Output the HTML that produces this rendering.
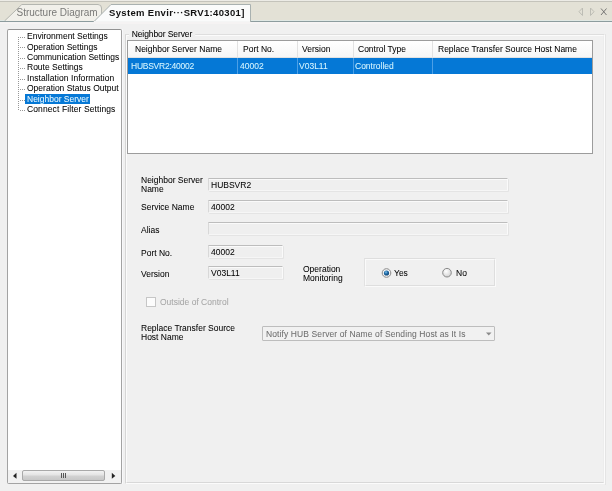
<!DOCTYPE html>
<html><head><meta charset="utf-8">
<style>
*{margin:0;padding:0;box-sizing:border-box}
html,body{width:612px;height:491px;overflow:hidden;background:#f0f0f0;font-family:"Liberation Sans",sans-serif;color:#000}
.a{position:absolute}
body{will-change:transform}
.t{position:absolute;font-size:9.5px;line-height:10px;white-space:nowrap;-webkit-text-stroke:0.05px currentColor;transform:scaleX(0.895);transform-origin:0 0}
.hl{position:absolute;background:#e4e2d6}
</style></head><body>

<!-- tab bar -->
<div class="a" style="left:0;top:0;width:612px;height:1px;background:#ecebe6"></div>
<div class="a" style="left:0;top:1px;width:612px;height:1px;background:#c4c3bb"></div>
<div class="a" style="left:0;top:2px;width:612px;height:18px;background:#e3e1d6"></div>
<div class="a" style="left:0;top:20px;width:612px;height:1px;background:#e0e8e4"></div>
<div class="a" style="left:0;top:21px;width:612px;height:1px;background:#8c9c9e"></div>
<div class="a" style="left:0;top:22px;width:612px;height:2px;background:#f5f3f3"></div>

<svg class="a" style="left:0;top:0" width="612" height="22" viewBox="0 0 612 22">
  <!-- inactive tab -->
  <path d="M5 21 L22 4 L98 4 Q101 4 101 7 L101 21 Z" fill="#f1f0ea"/>
  <path d="M4.5 21 L21.8 4.5 L98 4.5 Q101.5 4.5 101.5 8 L101.5 21" fill="none" stroke="#b4b6b0" stroke-width="1"/>
  <rect x="0" y="21" width="94" height="1" fill="#8c9c9e"/>
  <!-- active tab -->
  <path d="M93.5 22 L111 4.5 L250.5 4.5 L250.5 22 Z" fill="#fafbfb" stroke="#a9b1b0" stroke-width="1"/>
  <rect x="94" y="21" width="156" height="1.5" fill="#f4f5f5"/>
  <!-- right icons -->
  <path d="M582.5 8 L579 11.7 L582.5 15.5 Z" fill="none" stroke="#bdbdb5" stroke-width="1"/>
  <path d="M590.5 8 L594 11.7 L590.5 15.5 Z" fill="none" stroke="#bdbdb5" stroke-width="1"/>
  <path d="M601 8.5 L606.5 15 M606.5 8.5 L601 15" fill="none" stroke="#6a6a6a" stroke-width="0.9"/>
</svg>
<div class="t" style="left:16.5px;top:7px;-webkit-text-stroke:0;transform:none;font-size:10px;line-height:12px;color:#7a7a78">Structure Diagram</div>
<div class="t" style="left:109px;top:7px;-webkit-text-stroke:0;transform:none;font-size:9.5px;letter-spacing:0.33px;line-height:12px;font-weight:bold;color:#111">System Envir···SRV1:40301]</div>

<!-- tree box -->
<div class="a" style="left:7px;top:29px;width:115px;height:455px;background:#fff;border:1px solid #a3a3a3;border-top-color:#929292;border-radius:2px"></div>
<div class="a" style="left:122px;top:29px;width:1px;height:455px;background:#f8f8fa"></div>
<svg class="a" style="left:0;top:0" width="130" height="130">
  <g stroke="#979797" stroke-width="1" stroke-dasharray="1 1" fill="none">
    <path d="M18.5 37 V111"/>
    <path d="M20 37.5 H25"/>
    <path d="M20 47.5 H25"/>
    <path d="M20 58.5 H25"/>
    <path d="M20 68.5 H25"/>
    <path d="M20 79.5 H25"/>
    <path d="M20 89.5 H25"/>
    <path d="M20 100.5 H25"/>
    <path d="M20 110.5 H25"/>
  </g>
</svg>
<div class="a" style="left:25px;top:94px;width:65px;height:10px;background:#0578d6"></div>
<div class="t" style="left:27px;top:31px">Environment Settings</div>
<div class="t" style="left:27px;top:41.5px">Operation Settings</div>
<div class="t" style="left:27px;top:52px">Communication Settings</div>
<div class="t" style="left:27px;top:62px">Route Settings</div>
<div class="t" style="left:27px;top:72.5px;letter-spacing:0.08px">Installation Information</div>
<div class="t" style="left:27px;top:83px">Operation Status Output</div>
<div class="t" style="left:27px;top:93.5px;color:#e8f8ff">Neighbor Server</div>
<div class="t" style="left:27px;top:104px;letter-spacing:0.12px">Connect Filter Settings</div>

<!-- scrollbar -->
<div class="a" style="left:8px;top:470px;width:113px;height:13px;background:#f1f1f1"></div>
<svg class="a" style="left:0;top:460px" width="130" height="30">
  <path d="M16.5 12.8 L13 16 L16.5 18.8 Z" fill="#222"/>
  <path d="M111.8 12.8 L115.3 16 L111.8 18.8 Z" fill="#222"/>
  <defs><linearGradient id="th" x1="0" y1="0" x2="0" y2="1"><stop offset="0" stop-color="#f4f4f4"/><stop offset="0.45" stop-color="#e4e4e4"/><stop offset="0.55" stop-color="#d2d2d2"/><stop offset="1" stop-color="#c6c6c6"/></linearGradient></defs>
  <rect x="22.5" y="10.5" width="82" height="10" rx="1.5" fill="url(#th)" stroke="#a9a9a9"/>
  <path d="M61.5 13 V18 M63.5 13 V18 M65.5 13 V18" stroke="#555" stroke-width="1"/>
</svg>

<!-- right group box -->
<div class="a" style="left:125px;top:34px;width:480px;height:450px;border-top:1px solid #dedede;border-left:1px solid #d6d6d6;border-bottom:1px solid #fbfbfb;border-right:1px solid #fbfbfb"></div>
<div class="a" style="left:126px;top:35px;width:478px;height:448px;border-top:1px solid #fbfbfb;border-left:1px solid #fbfbfb;border-bottom:1px solid #d8d8d8;border-right:1px solid #ececec"></div>
<div class="a" style="left:605px;top:34px;width:1px;height:451px;background:#e4e4e4"></div>
<div class="t" style="left:129px;top:28.5px;padding:0 3px;background:#f0f0f0;letter-spacing:-0.1px">Neighbor Server</div>

<!-- table -->
<div class="a" style="left:127px;top:40px;width:466px;height:114px;background:#fff;border:1px solid #9c9c9c"></div>
<div class="a" style="left:128px;top:41px;width:464px;height:17px;background:linear-gradient(#ffffff,#f6f6f6)"></div>
<div class="a" style="left:128px;top:57px;width:464px;height:1px;background:#e2e2e2"></div>
<div class="a" style="left:237px;top:41px;width:1px;height:17px;background:#e2e2e2"></div>
<div class="a" style="left:297px;top:41px;width:1px;height:17px;background:#e2e2e2"></div>
<div class="a" style="left:353px;top:41px;width:1px;height:17px;background:#e2e2e2"></div>
<div class="a" style="left:432px;top:41px;width:1px;height:17px;background:#e2e2e2"></div>
<div class="t" style="left:135px;top:44px">Neighbor Server Name</div>
<div class="t" style="left:243px;top:44px">Port No.</div>
<div class="t" style="left:302px;top:44px">Version</div>
<div class="t" style="left:358px;top:44px">Control Type</div>
<div class="t" style="left:438px;top:44px">Replace Transfer Source Host Name</div>
<div class="a" style="left:128px;top:58px;width:464px;height:16px;background:#0578d6"></div>
<div class="a" style="left:237px;top:58px;width:1px;height:16px;background:#4c9fe6"></div>
<div class="a" style="left:297px;top:58px;width:1px;height:16px;background:#4c9fe6"></div>
<div class="a" style="left:353px;top:58px;width:1px;height:16px;background:#4c9fe6"></div>
<div class="a" style="left:432px;top:58px;width:1px;height:16px;background:#4c9fe6"></div>
<div class="t" style="left:131px;top:61px;color:#d8f6ff;letter-spacing:-0.28px">HUBSVR2:40002</div>
<div class="t" style="left:240px;top:61px;color:#d8f6ff">40002</div>
<div class="t" style="left:299px;top:61px;color:#d8f6ff">V03L11</div>
<div class="t" style="left:355px;top:61px;color:#d8f6ff">Controlled</div>

<!-- form -->
<div class="t" style="left:141px;top:175px;line-height:9px">Neighbor Server<br>Name</div>
<div class="t" style="left:141px;top:202px">Service Name</div>
<div class="t" style="left:141px;top:225px">Alias</div>
<div class="t" style="left:141px;top:248px">Port No.</div>
<div class="t" style="left:141px;top:269px">Version</div>
<div class="t" style="left:303px;top:264px;line-height:9px">Operation<br>Monitoring</div>

<div class="a" style="left:208px;top:178px;width:300px;height:13px;background:#efefef;border-top:1px solid #bdbdbd;border-left:1px solid #d8d8d8;border-right:1px solid #fafafa;border-bottom:1px solid #f6f6f6;box-shadow:inset 0 1px 0 #fafafa,1px 1px 0 #e4e4e4;border-radius:1px"></div>
<div class="a" style="left:208px;top:200px;width:300px;height:13px;background:#efefef;border-top:1px solid #bdbdbd;border-left:1px solid #d8d8d8;border-right:1px solid #fafafa;border-bottom:1px solid #f6f6f6;box-shadow:inset 0 1px 0 #fafafa,1px 1px 0 #e4e4e4;border-radius:1px"></div>
<div class="a" style="left:208px;top:222px;width:300px;height:13px;background:#efefef;border-top:1px solid #bdbdbd;border-left:1px solid #d8d8d8;border-right:1px solid #fafafa;border-bottom:1px solid #f6f6f6;box-shadow:inset 0 1px 0 #fafafa,1px 1px 0 #e4e4e4;border-radius:1px"></div>
<div class="a" style="left:208px;top:245px;width:75px;height:13px;background:#efefef;border-top:1px solid #bdbdbd;border-left:1px solid #d8d8d8;border-right:1px solid #fafafa;border-bottom:1px solid #f6f6f6;box-shadow:inset 0 1px 0 #fafafa,1px 1px 0 #e4e4e4;border-radius:1px"></div>
<div class="a" style="left:208px;top:266px;width:75px;height:13px;background:#efefef;border-top:1px solid #bdbdbd;border-left:1px solid #d8d8d8;border-right:1px solid #fafafa;border-bottom:1px solid #f6f6f6;box-shadow:inset 0 1px 0 #fafafa,1px 1px 0 #e4e4e4;border-radius:1px"></div>
<div class="t" style="left:211px;top:180px">HUBSVR2</div>
<div class="t" style="left:211px;top:202px">40002</div>
<div class="t" style="left:211px;top:247px">40002</div>
<div class="t" style="left:211px;top:268px">V03L11</div>

<!-- operation monitoring group -->
<div class="a" style="left:364px;top:258px;width:132px;height:29px;border-top:1px solid #dedede;border-left:1px solid #e2e2e2;border-right:1px solid #fafafa;border-bottom:1px solid #fafafa"></div>
<div class="a" style="left:365px;top:259px;width:130px;height:27px;border-top:1px solid #fafafa;border-left:1px solid #fafafa;border-right:1px solid #dedede;border-bottom:1px solid #dedede"></div>
<svg class="a" style="left:370px;top:262px" width="100" height="20">
  <defs>
    <radialGradient id="rg1" cx="0.4" cy="0.35" r="0.75"><stop offset="0" stop-color="#7cc0ea"/><stop offset="0.45" stop-color="#1f6aa6"/><stop offset="1" stop-color="#0e3a66"/></radialGradient>
    <radialGradient id="rg2" cx="0.4" cy="0.35" r="0.7"><stop offset="0" stop-color="#ffffff"/><stop offset="1" stop-color="#cfcfcf"/></radialGradient>
  </defs>
  <circle cx="16.5" cy="11" r="4.3" fill="#f4f4f4" stroke="#8a8a8a" stroke-width="1"/>
  <circle cx="16.5" cy="11" r="2.6" fill="url(#rg1)"/>
  <circle cx="77" cy="10.7" r="4.3" fill="url(#rg2)" stroke="#8a8a8a" stroke-width="1"/>
</svg>
<div class="t" style="left:394px;top:268px">Yes</div>
<div class="t" style="left:456px;top:268px">No</div>

<!-- checkbox -->
<div class="a" style="left:146px;top:297px;width:10px;height:10px;background:#fcfcfc;border:1px solid #c6c6c6"></div>
<div class="t" style="left:160px;top:297px;color:#a6a6a6">Outside of Control</div>

<div class="t" style="left:141px;top:323px;line-height:9px">Replace Transfer Source<br>Host Name</div>
<div class="a" style="left:262px;top:326px;width:233px;height:15px;background:#f1f1f1;border:1px solid #bdbdbd;border-radius:1px"></div>
<div class="t" style="left:266px;top:329px;color:#6d6d6d;letter-spacing:0.12px">Notify HUB Server of Name of Sending Host as It Is</div>
<svg class="a" style="left:480px;top:326px" width="15" height="15">
  <path d="M6 6.5 L11.5 6.5 L8.75 9.5 Z" fill="#8a8a8a"/>
</svg>

</body></html>
